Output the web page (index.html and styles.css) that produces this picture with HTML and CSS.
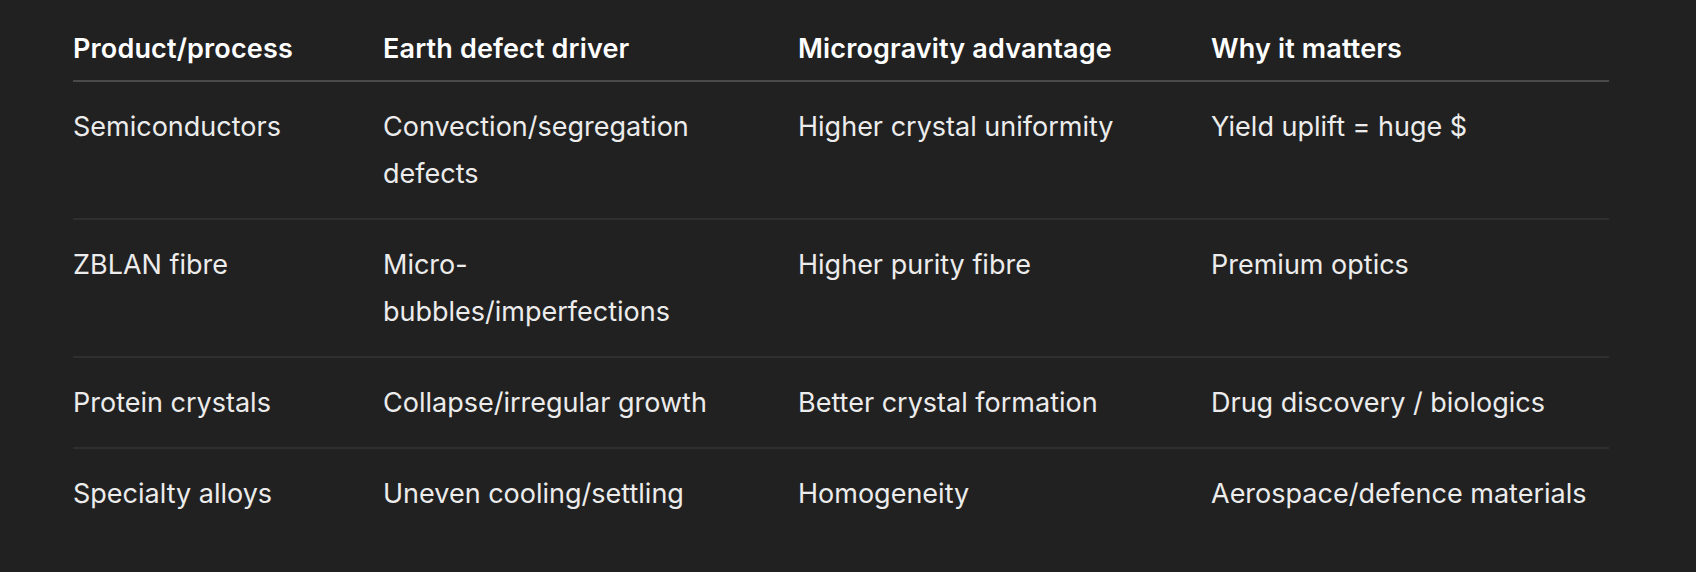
FILE: index.html
```html
<!DOCTYPE html>
<html lang="en">
<head>
<meta charset="utf-8">
<title>Microgravity manufacturing</title>
<link rel="stylesheet" href="styles.css">
</head>
<body>
<div class="page">
  <table class="data-table">
    <colgroup>
      <col class="c1">
      <col class="c2">
      <col class="c3">
      <col class="c4">
    </colgroup>
    <thead>
      <tr>
        <th>Product/process</th>
        <th>Earth defect driver</th>
        <th>Microgravity advantage</th>
        <th>Why it matters</th>
      </tr>
    </thead>
    <tbody>
      <tr>
        <td>Semiconductors</td>
        <td>Convection/segregation defects</td>
        <td>Higher crystal uniformity</td>
        <td>Yield uplift = huge $</td>
      </tr>
      <tr>
        <td>ZBLAN fibre</td>
        <td>Micro-bubbles/imperfections</td>
        <td>Higher purity fibre</td>
        <td>Premium optics</td>
      </tr>
      <tr>
        <td>Protein crystals</td>
        <td>Collapse/irregular growth</td>
        <td>Better crystal formation</td>
        <td>Drug discovery / biologics</td>
      </tr>
      <tr>
        <td>Specialty alloys</td>
        <td>Uneven cooling/settling</td>
        <td>Homogeneity</td>
        <td>Aerospace/defence materials</td>
      </tr>
    </tbody>
  </table>
</div>
</body>
</html>
```

FILE: styles.css
```css
html, body {
  margin: 0;
  padding: 0;
  background: #212121;
}

body {
  font-family: Inter, "Noto Sans", "Liberation Sans", sans-serif;
  color: #ececec;
  font-size: 27px;
  line-height: 47.25px;
}

.page {
  padding: 13px 87px 0 73px;
}

.data-table {
  width: 1536px;
  border-collapse: collapse;
  table-layout: fixed;
}

.c1 { width: 310px; }
.c2 { width: 415px; }
.c3 { width: 413px; }
.c4 { width: 398px; }

.data-table th,
.data-table td {
  text-align: left;
  vertical-align: top;
  padding: 20.75px 52px 20.75px 0;
}

.data-table th:last-child,
.data-table td:last-child {
  padding-right: 0;
}

.data-table th {
  font-weight: 600;
  color: #ffffff;
  letter-spacing: 0.15px;
  padding-top: 12px;
  padding-bottom: 8px;
}

.data-table thead tr {
  border-bottom: 2px solid #4a4a4a;
}

.data-table tbody tr {
  border-bottom: 2px solid #2f2f2f;
}

.data-table tbody tr:last-child {
  border-bottom: none;
}
```
